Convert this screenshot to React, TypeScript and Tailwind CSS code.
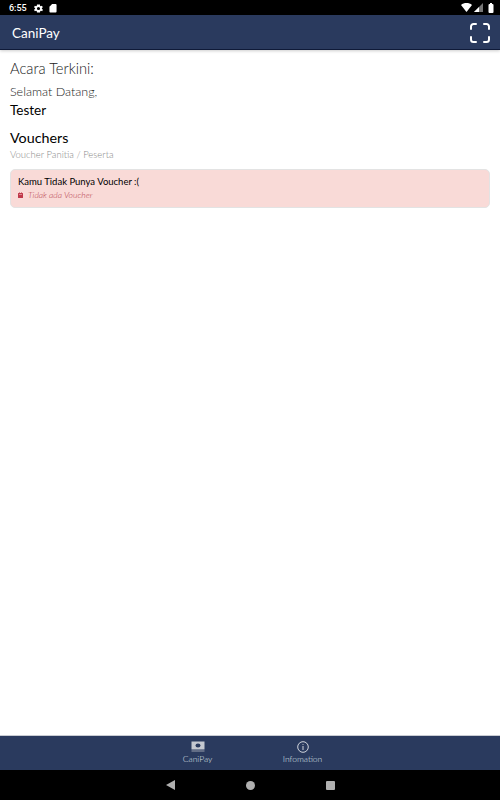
export default function App() {
  return (
    <div className="flex h-[800px] w-[500px] flex-col overflow-hidden bg-white font-['Lato',sans-serif]">
      {/* status bar */}
      <div className="flex h-[15px] items-center justify-between bg-black pl-[9px] pr-[6px] text-white">
        <div className="flex items-center pt-px">
          <span className="font-['Roboto',sans-serif] text-[9px] font-medium leading-none">6:55</span>
          <svg className="ml-[6px]" width="11" height="11" viewBox="0 0 24 24" fill="#fff"><path fillRule="evenodd" d="M19.400 13a7.500 7.500 0 0 0 0-2l2.100-1.600-2-3.500-2.500 1a7.500 7.500 0 0 0-1.700-1L15.300 3.200h-6.600l-.4 2.700a7.500 7.500 0 0 0-1.700 1l-2.500-1-2 3.500L4.600 11a7.500 7.500 0 0 0 0 2l-2.500 1.600 2 3.500 2.500-1a7.500 7.500 0 0 0 1.700 1l.4 2.700h6.600l.4-2.700a7.500 7.500 0 0 0 1.700-1l2.500 1 2-3.500zM12 15.500a3.500 3.500 0 1 1 0-7 3.500 3.500 0 0 1 0 7z"/></svg>
          <svg className="ml-[5px]" width="8" height="10" viewBox="0 0 18 20" fill="#fff"><path d="M7 1h8a2 2 0 0 1 2 2v15a2 2 0 0 1-2 2H3a2 2 0 0 1-2-2V7z"/></svg>
        </div>
        <div className="flex items-center gap-[2px]">
          <svg width="11" height="9" viewBox="0 0 22 18" fill="#fff"><path d="M0 4C6-1.300 16-1.300 22 4L11 18z"/></svg>
          <svg width="9" height="9" viewBox="0 0 18 18"><path d="M18 0v18H0z" fill="#777"/><path d="M10 9v9H0l10-10z" fill="#fff"/></svg>
          <svg className="ml-[3px]" width="6" height="10" viewBox="0 0 12 20" fill="#fff"><path d="M3 2h1V0h4v2h1a2 2 0 0 1 2 2v14a2 2 0 0 1-2 2H3a2 2 0 0 1-2-2V4a2 2 0 0 1 2-2z"/></svg>
        </div>
      </div>

      {/* app bar */}
      <div className="flex h-[35px] items-center justify-between border-b border-[#0f1a38] bg-[#2a3a5e] pl-[12px] pr-[10px] shadow-[0_1px_3px_rgba(0,0,0,0.2)]">
        <span className="pt-[3px] text-[13.500px] leading-none text-white">CaniPay</span>
        <svg className="mt-[1px]" width="20" height="20" viewBox="0 0 20 20" fill="none" stroke="#fff" strokeWidth="2" strokeLinecap="round">
          <path d="M1 6V3.500A2.500 2.500 0 0 1 3.500 1H6M14 1h2.500A2.500 2.500 0 0 1 19 3.500V6M19 14v2.500a2.500 2.500 0 0 1-2.500 2.500H14M6 19H3.500A2.500 2.500 0 0 1 1 16.500V14" />
        </svg>
      </div>

      {/* content */}
      <div className="flex flex-1 flex-col px-[10px]">
        <div className="mt-[9px] text-[14.700px] font-light leading-[18px] text-[#222]">Acara Terkini:</div>
        <div className="mt-[7px] text-[12.500px] font-light leading-[15px] text-[#222]">Selamat Datang,</div>
        <div className="mt-[3px] text-[13.500px] leading-[16px] text-black">Tester</div>
        <div className="mt-[11px] text-[14.300px] leading-[18px] text-black">Vouchers</div>
        <div className="mt-[2px] text-[9.500px] font-light leading-[12px] text-[#888]">Voucher Panitia / Peserta</div>
        <div className="mt-[8px] flex h-[39px] w-[480px] flex-col rounded-[5px] border border-[#e3e3e3] bg-[#f9dad7] pl-[7px] pt-[6px]">
          <div className="text-[9.500px] leading-[12px] text-black">Kamu Tidak Punya Voucher :(</div>
          <div className="mt-[2px] flex items-center">
            <svg width="5" height="6" viewBox="0 0 10 12" fill="#c0394b"><path d="M0 3a1 1 0 0 1 1-1h1V0h1v2h4V0h1v2h1a1 1 0 0 1 1 1v8a1 1 0 0 1-1 1H1a1 1 0 0 1-1-1z"/><path d="M2 5h6v1H2z" fill="#f9dad7"/></svg>
            <span className="ml-[5px] text-[8.600px] font-light italic leading-[10px] text-[#b8434f]">Tidak ada Voucher</span>
          </div>
        </div>
      </div>

      {/* bottom nav */}
      <div className="flex h-[35px] justify-center border-t border-[#c9ccd3] bg-[#2a3a5e]">
        <div className="flex w-[105px] flex-col items-center pt-[5px]">
          <svg width="14" height="12" viewBox="0 0 14 12">
            <rect x="0.500" y="0.500" width="13" height="8" fill="#c4c8d0" />
            <ellipse cx="7" cy="4.500" rx="2.500" ry="2" fill="#2a3a5e" />
            <rect x="0.500" y="9.500" width="13" height="1" fill="#9aa0ae" />
          </svg>
          <span className="mt-[2px] text-[8.500px] font-light leading-[9px] text-[#dfe2e8]">CaniPay</span>
        </div>
        <div className="flex w-[105px] flex-col items-center pt-[5px]">
          <svg width="12" height="12" viewBox="0 0 12 12" fill="none" stroke="#e4e6eb" strokeWidth="0.900">
            <circle cx="6" cy="6" r="5.300" />
            <path d="M6 3.200v.8M6 5v4" />
          </svg>
          <span className="mt-[2px] text-[8.500px] font-light leading-[9px] text-[#dfe2e8]">Infomation</span>
        </div>
      </div>

      {/* system nav */}
      <div className="flex h-[30px] items-center justify-center bg-black">
        <svg className="mr-[71px]" width="9" height="10" viewBox="0 0 9 10" fill="#b0b0b0"><path d="M9 0v10L0 5z"/></svg>
        <div className="h-[9px] w-[9px] rounded-full bg-[#b0b0b0]" />
        <div className="ml-[71px] h-[9px] w-[9px] rounded-[1px] bg-[#b0b0b0]" />
      </div>
    </div>
  );
}
